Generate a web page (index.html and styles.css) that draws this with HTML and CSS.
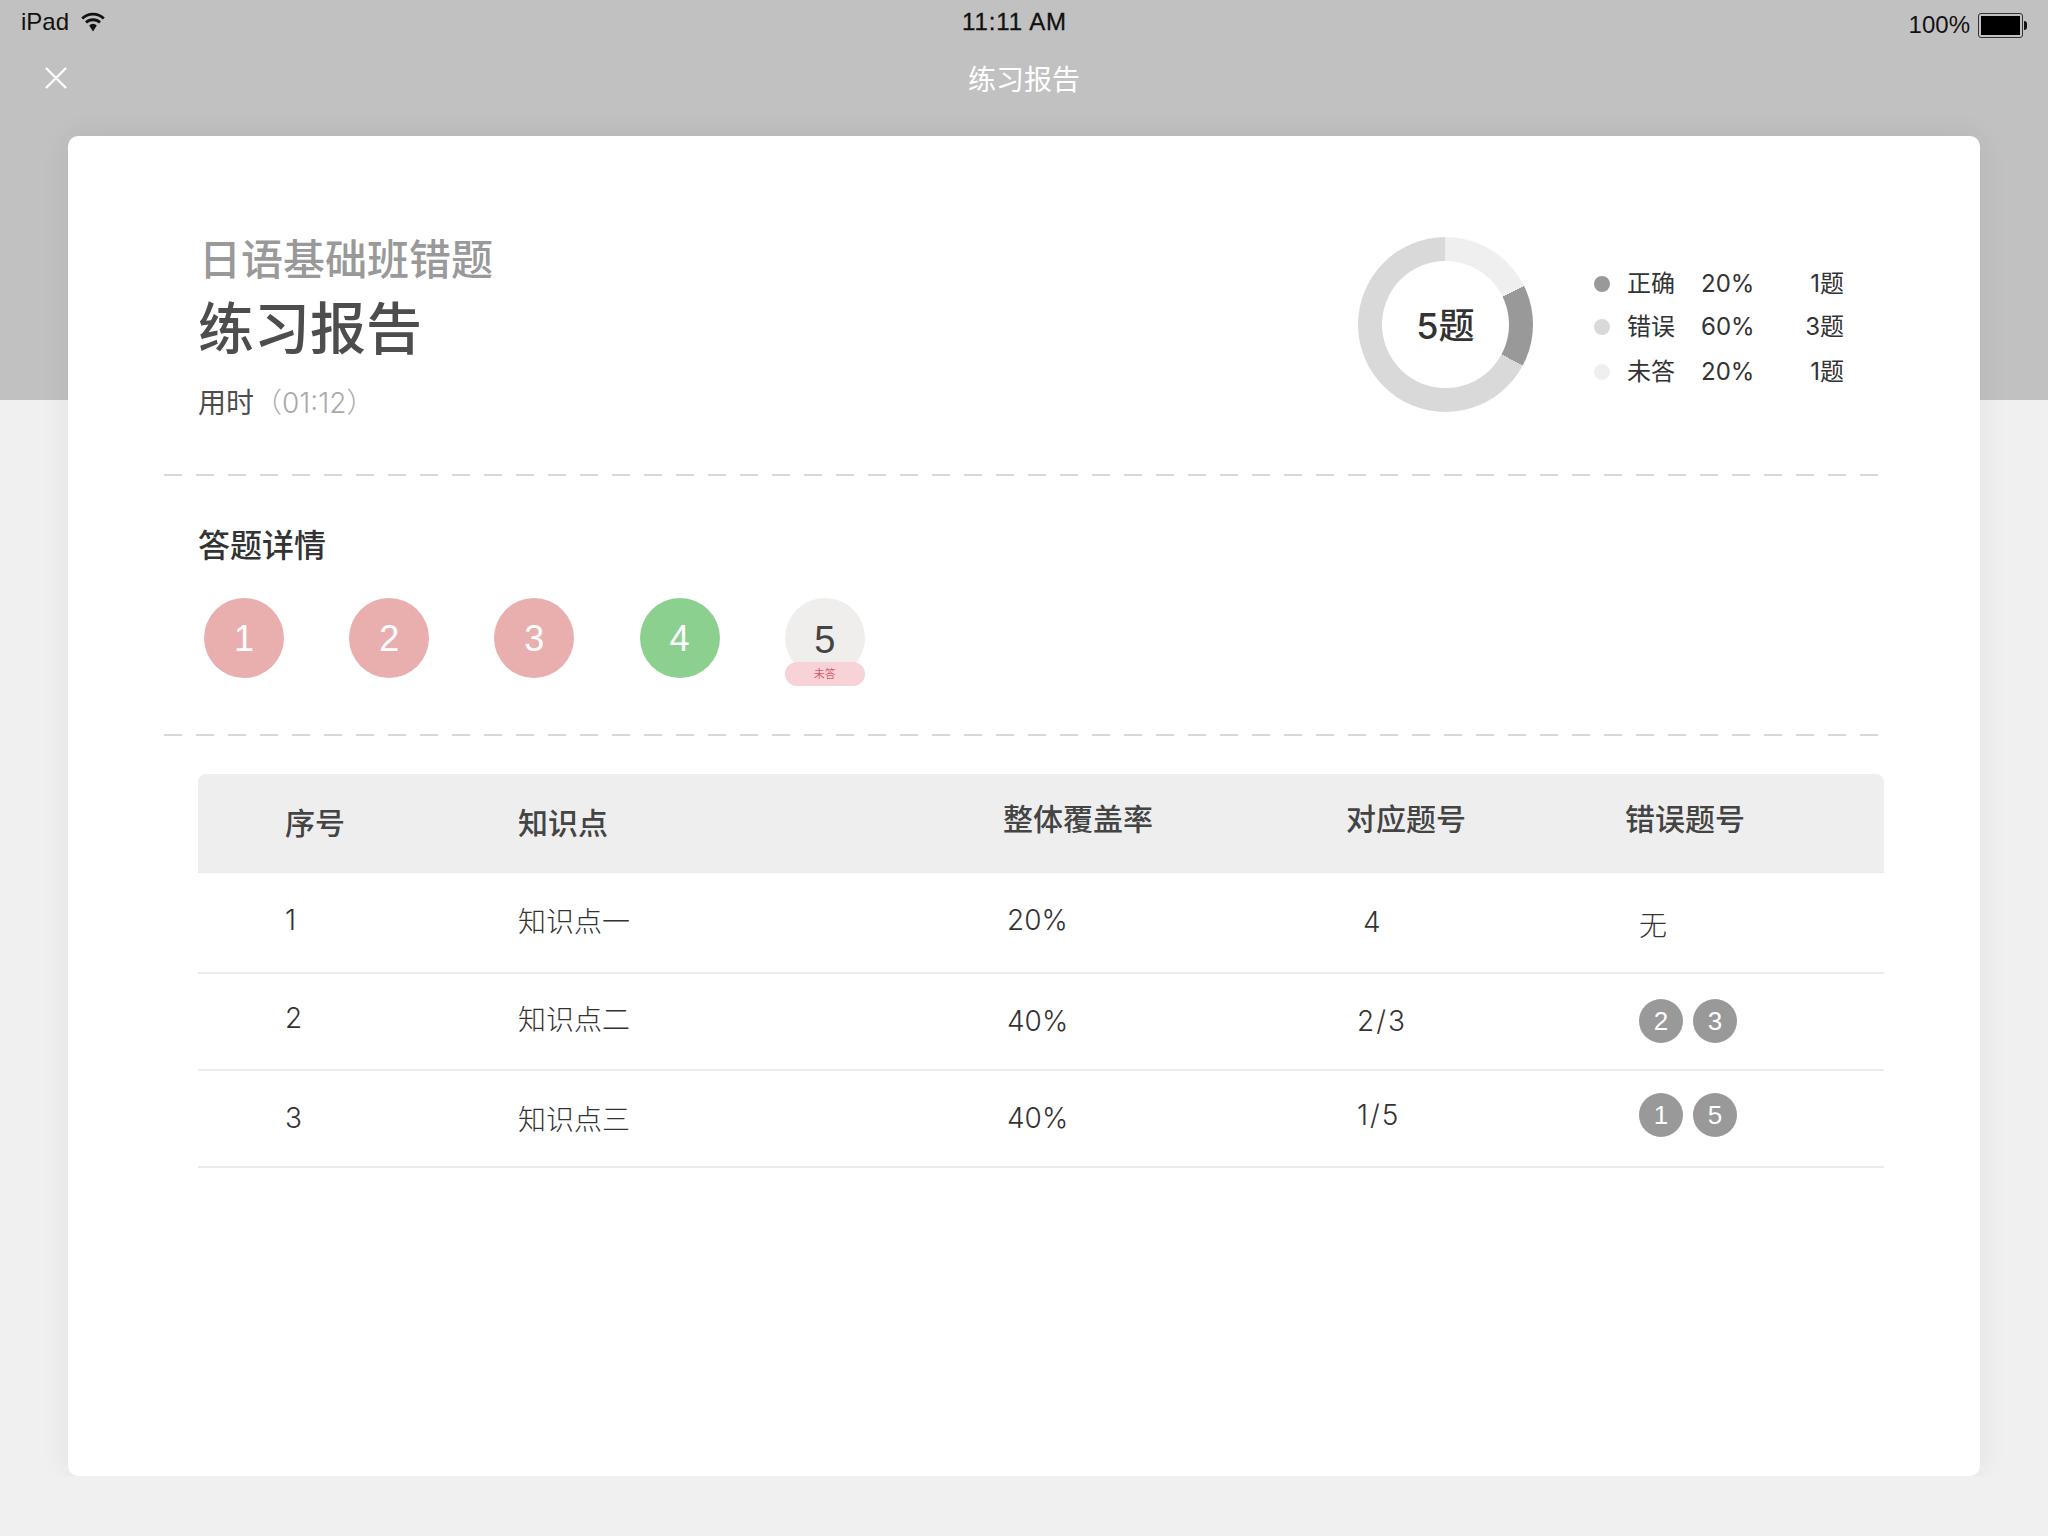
FILE: index.html
```html
<!DOCTYPE html>
<html lang="zh-CN">
<head>
    <meta charset="UTF-8">
    <title>练习报告</title>
    <link rel="stylesheet" href="styles.css">
</head>
<body>

    <header class="hero">
        <div class="status-bar">
            <div class="status-left">
                <span>iPad</span>
                <svg class="wifi" width="24" height="20" viewBox="0 0 24 20">
                    <path d="M1.2 6.6a15.5 15.5 0 0 1 21.6 0" fill="none" stroke="#111" stroke-width="2.8"/>
                    <path d="M5 10.6a10 10 0 0 1 14 0" fill="none" stroke="#111" stroke-width="2.8"/>
                    <path d="M8.2 13.4a5.4 5.4 0 0 1 7.6 0L12 19.5z" fill="#111"/>
                </svg>
            </div>
            <div class="status-time">11:11 AM</div>
            <div class="status-right">
                <span>100%</span>
                <span class="battery"><span class="battery-fill"></span></span>
            </div>
        </div>
        <div class="nav-bar">
            <svg class="close-icon" width="24" height="24" viewBox="0 0 24 24">
                <path d="M2 2l20 20M22 2L2 22" stroke="#fff" stroke-width="2.4" fill="none"/>
            </svg>
            <div class="nav-title">练习报告</div>
        </div>
    </header>

    <main class="card">
        <section class="report-head">
            <div class="report-info">
                <div class="report-course">日语基础班错题</div>
                <h1 class="report-title">练习报告</h1>
                <div class="report-time">用时<span class="report-time-value">（01:12）</span></div>
            </div>
            <div class="report-stats">
                <div class="donut"><div class="donut-hole">5题</div></div>
                <div class="legend">
                    <div class="legend-row">
                        <span class="dot dot-right"></span><span>正确</span><span>20%</span><span class="legend-count">1题</span>
                    </div>
                    <div class="legend-row">
                        <span class="dot dot-wrong"></span><span>错误</span><span>60%</span><span class="legend-count">3题</span>
                    </div>
                    <div class="legend-row legend-row-last">
                        <span class="dot dot-blank"></span><span>未答</span><span>20%</span><span class="legend-count">1题</span>
                    </div>
                </div>
            </div>
        </section>

        <div class="dashed"></div>

        <section class="answers">
            <h2 class="answers-title">答题详情</h2>
            <div class="answer-list">
                <div class="answer answer-wrong">1</div>
                <div class="answer answer-wrong">2</div>
                <div class="answer answer-wrong">3</div>
                <div class="answer answer-right">4</div>
                <div class="answer answer-blank">5<span class="answer-badge">未答</span></div>
            </div>
        </section>

        <div class="dashed"></div>

        <section class="points">
            <div class="points-row points-header">
                <div class="col-no">序号</div>
                <div class="col-name">知识点</div>
                <div class="col-rate lift">整体覆盖率</div>
                <div class="col-ids lift">对应题号</div>
                <div class="col-wrong lift">错误题号</div>
            </div>
            <div class="points-row">
                <div class="col-no lift">1</div>
                <div class="col-name lift">知识点一</div>
                <div class="col-rate cell-inset lift">20%</div>
                <div class="col-ids cell-one">4</div>
                <div class="col-wrong cell-none drop">无</div>
            </div>
            <div class="points-row points-row-short">
                <div class="col-no lift">2</div>
                <div class="col-name lift">知识点二</div>
                <div class="col-rate cell-inset">40%</div>
                <div class="col-ids cell-pair">2/3</div>
                <div class="col-wrong cell-chips">
                    <span class="chip">2</span><span class="chip">3</span>
                </div>
            </div>
            <div class="points-row points-row-short">
                <div class="col-no">3</div>
                <div class="col-name">知识点三</div>
                <div class="col-rate cell-inset">40%</div>
                <div class="col-ids cell-pair lift">1/5</div>
                <div class="col-wrong cell-chips lift">
                    <span class="chip">1</span><span class="chip">5</span>
                </div>
            </div>
        </section>
    </main>

</body>
</html>
```

FILE: styles.css
```css
body {
    margin: 0;
    padding: 0;
    background-color: #f0f0f0;
    font-family: Inter, "Noto Sans CJK SC", sans-serif;
    font-weight: 300;
    color: #333;
}

h1, h2 {
    margin: 0;
    font-weight: 400;
}

/* Grey band behind the card */
.hero {
    height: 400px;
    background-color: #c1c1c1;
}

.status-bar {
    display: grid;
    grid-template-columns: 1fr auto 1fr;
    height: 44px;
    padding: 0 25px 0 21px;
    font-family: "Liberation Sans", sans-serif;
    font-weight: 400;
    font-size: 24px;
    line-height: 44px;
    color: #111;
}

.status-left {
    display: flex;
    align-items: center;
    gap: 12px;
    padding-bottom: 3px;
}

.status-time {
    margin-right: 15px;
    letter-spacing: 0.9px;
    -webkit-text-stroke: 0.3px #111;
}

.status-right {
    display: flex;
    align-items: center;
    justify-content: flex-end;
    gap: 8px;
    padding-top: 3px;
}

.battery {
    position: relative;
    display: block;
    box-sizing: border-box;
    width: 45px;
    height: 25px;
    padding: 2px;
    border: 1px solid #333;
    border-radius: 3px;
}

.battery:after {
    content: "";
    position: absolute;
    right: -5px;
    top: 7px;
    width: 3px;
    height: 9px;
    background-color: #111;
    border-radius: 0 3px 3px 0;
}

.battery-fill {
    display: block;
    height: 100%;
    background-color: #000;
}

.nav-bar {
    position: relative;
    height: 70px;
    text-align: center;
}

.nav-title {
    font-family: "Noto Sans CJK SC", sans-serif;
    font-size: 28px;
    font-weight: 400;
    line-height: 68px;
    color: #fff;
}

.close-icon {
    position: absolute;
    left: 44px;
    top: 22px;
}

/* Main card */
.card {
    box-sizing: border-box;
    width: 1912px;
    height: 1340px;
    margin: -264px 0 0 68px;
    padding: 100px 96px 0 130px;
    background-color: #fff;
    border-radius: 10px;
    box-shadow: 0 0 30px rgba(0, 0, 0, 0.07);
}

.report-head {
    display: flex;
    justify-content: space-between;
    height: 238px;
}

.report-info {
    padding-top: 1px;
}

.report-course {
    margin-left: 1px;
    font-size: 42px;
    line-height: 46px;
    font-weight: 500;
    color: #999;
}

.report-title {
    margin-top: 14px;
    font-size: 56px;
    line-height: 64px;
    font-weight: 500;
    color: #4d4d4d;
}

.report-time {
    margin-top: 24px;
    font-size: 28px;
    line-height: 36px;
    font-weight: 400;
    color: #4d4d4d;
}

.report-time-value {
    font-weight: 300;
    color: #aaa;
}

.report-stats {
    display: flex;
    margin-right: 40px;
    padding-top: 1px;
}

.donut {
    display: flex;
    align-items: center;
    justify-content: center;
    width: 175px;
    height: 175px;
    border-radius: 50%;
    background: conic-gradient(#efefef 0 64deg, #999 64deg 118deg, #d9d9d9 118deg);
}

.donut-hole {
    width: 127px;
    height: 127px;
    border-radius: 50%;
    background-color: #fff;
    font-size: 36px;
    font-weight: 500;
    line-height: 131px;
    text-align: center;
    color: #333;
}

.legend {
    width: 250px;
    margin: 25px 0 0 61px;
    font-size: 24px;
    font-weight: 400;
    line-height: 43px;
}

.legend-row {
    display: grid;
    grid-template-columns: 33px 74px 60px 1fr;
    align-items: center;
}

.legend-row-last {
    margin-top: 2px;
}

.legend-count {
    text-align: right;
}

.dot {
    width: 16px;
    height: 16px;
    border-radius: 50%;
}

.dot-right { background-color: #999; }
.dot-wrong { background-color: #d9d9d9; }
.dot-blank { background-color: #efefef; }

.dashed {
    width: 1714px;
    height: 2px;
    margin-left: -34px;
    background: repeating-linear-gradient(to right, #d8d8d8 0 18px, transparent 18px 32px);
}

/* Answer circles */
.answers {
    box-sizing: border-box;
    height: 258px;
    padding-top: 48px;
}

.answers-title {
    font-size: 32px;
    font-weight: 500;
    line-height: 44px;
    color: #333;
}

.answer-list {
    display: flex;
    gap: 65.2px;
    margin: 30px 0 0 6px;
}

.answer {
    position: relative;
    width: 80px;
    height: 80px;
    border-radius: 50%;
    font-family: "Liberation Sans", sans-serif;
    font-size: 36px;
    font-weight: 400;
    line-height: 82px;
    text-align: center;
    color: #fff;
}

.answer-wrong { background-color: #e9afaf; }
.answer-right { background-color: #8bd08f; }

.answer-blank {
    background-color: #efeeed;
    font-size: 38px;
    line-height: 84px;
    color: #444;
}

.answer-badge {
    position: absolute;
    left: 0;
    bottom: -8px;
    width: 80px;
    height: 24px;
    border-radius: 12px;
    background-color: #f7d3d8;
    font-family: "Noto Sans CJK SC", sans-serif;
    font-size: 11px;
    line-height: 22px;
    color: #d9596c;
}

/* Knowledge point table */
.points {
    margin-top: 38px;
    width: 1686px;
}

.points-row {
    display: grid;
    grid-template-columns: 320px 485px 343px 279px 1fr;
    align-items: center;
    height: 101px;
    box-sizing: border-box;
    border-bottom: 2px solid #ebebeb;
    font-size: 28px;
    color: #333;
}

.points-row-short {
    height: 97px;
    padding-bottom: 2px;
}

.points-header {
    height: 99px;
    padding-bottom: 5px;
    background-color: #eee;
    border-bottom: 1px solid #e9e9e9;
    border-radius: 8px 8px 0 0;
    font-size: 30px;
    font-weight: 500;
    color: #444;
}

.col-no { padding-left: 87px; }

.lift { margin-bottom: 6px; }
.points-header .lift { margin-bottom: 8px; }
.drop { margin-top: 3px; }

.cell-inset { padding-left: 4px; }
.cell-one { padding: 0 0 2px 17px; }
.cell-pair { padding-left: 11px; letter-spacing: 2px; }
.cell-none { padding-left: 14px; }

.cell-chips {
    display: flex;
    gap: 10px;
    padding-left: 14px;
}

.chip {
    width: 44px;
    height: 44px;
    border-radius: 50%;
    background-color: #999;
    font-family: "Liberation Sans", sans-serif;
    font-size: 26px;
    font-weight: 400;
    line-height: 44px;
    text-align: center;
    color: #fff;
}
```
